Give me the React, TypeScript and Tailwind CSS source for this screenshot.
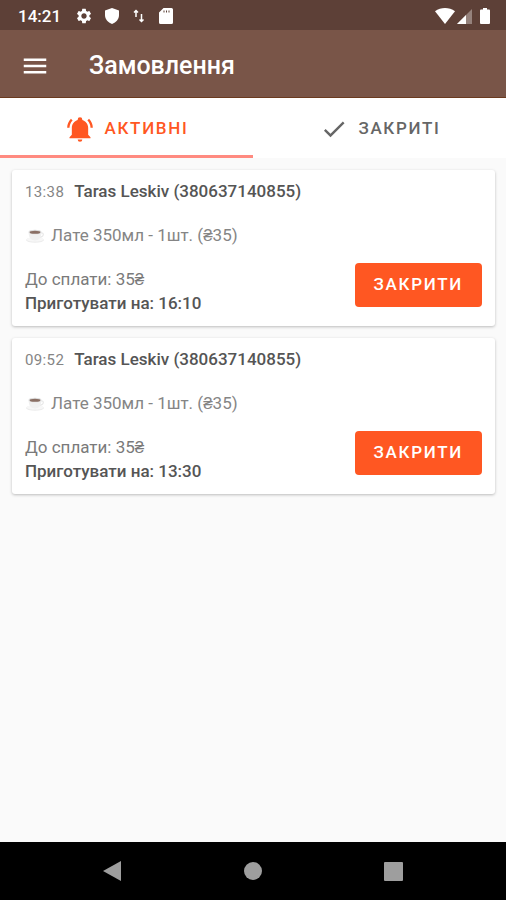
import { useState } from 'react';
import { MdCheck, MdMenu, MdSettings } from 'react-icons/md';

interface Order {
  id: number;
  time: string;
  customer: string;
  phone: string;
  item: string;
  total: number;
  readyAt: string;
}

const initialOrders: Order[] = [
  { id: 1, time: '13:38', customer: 'Taras Leskiv', phone: '380637140855', item: 'Лате 350мл - 1шт. (₴35)', total: 35, readyAt: '16:10' },
  { id: 2, time: '09:52', customer: 'Taras Leskiv', phone: '380637140855', item: 'Лате 350мл - 1шт. (₴35)', total: 35, readyAt: '13:30' },
];

function StatusBar() {
  return (
    <div className="flex h-[30px] items-center justify-between bg-[#5d4037] pt-0.5 pl-[18px] pr-4 text-white">
      <div className="flex items-center">
        <span className="w-[57px] text-[17px] leading-5 font-medium">14:21</span>
        <MdSettings className="h-[18px] w-[18px]" />
        <svg viewBox="0 0 14 16" className="ml-3 h-4 w-3.5" fill="currentColor">
          <path d="M7 0 14 2.6V7c0 4.2-2.8 7.4-7 9-4.2-1.6-7-4.8-7-9V2.6z" />
        </svg>
        <svg viewBox="0 0 12 16" className="ml-3.5 h-4 w-3" fill="none" stroke="currentColor" strokeWidth="1.5">
          <path d="M3 9V2.500M1 4.500l2-2 2 2M8.500 6v7.500M6.500 11.500l2 2 2-2" />
        </svg>
        <svg viewBox="0 0 14 16" className="ml-3.5 h-4 w-3.5" fill="currentColor">
          <path fillRule="evenodd" d="M4.500 0h8A1.500 1.500 0 0 1 14 1.500v13a1.500 1.500 0 0 1-1.500 1.500h-11A1.500 1.500 0 0 1 0 14.500V4.500zM4.500 2.500v2h1v-2zM7 2.500v2h1v-2zM9.500 2.500v2h1v-2z" />
        </svg>
      </div>
      <div className="flex items-center">
        <svg viewBox="0 0 20 16" className="h-4 w-5" fill="currentColor">
          <path d="M0 3.200C6-1 14-1 20 3.200L10 16z" />
        </svg>
        <svg viewBox="0 0 15 15" className="mr-2 ml-0.5 h-[15px] w-[15px]" fill="currentColor">
          <path d="M15 0v15H0z" opacity="0.35" />
          <path d="M9 6v9H0z" />
        </svg>
        <svg viewBox="0 0 10 16" className="h-4 w-2.5" fill="currentColor">
          <path d="M3 0h4v1.500h2a1 1 0 0 1 1 1V15a1 1 0 0 1-1 1H1a1 1 0 0 1-1-1V2.500a1 1 0 0 1 1-1h2z" />
        </svg>
      </div>
    </div>
  );
}

function BellRingIcon() {
  return (
    <svg viewBox="0 0 24 24" className="h-7 w-7" fill="currentColor">
      <path d="M21 19v1H3v-1l2-2v-6c0-3.100 2.030-5.830 5-6.710V4a2 2 0 0 1 4 0v.290c2.970.880 5 3.610 5 6.710v6l2 2m-7 2a2 2 0 0 1-4 0m9.750-17.810-1.420 1.420A8.980 8.980 0 0 1 21 11h2c0-2.930-1.160-5.750-3.250-7.810M1 11h2c0-2.400.960-4.700 2.670-6.390L4.250 3.190C2.160 5.250 1 8.070 1 11z" />
    </svg>
  );
}

function CoffeeIcon() {
  return (
    <svg viewBox="0 0 20 16" className="h-4 w-5 shrink-0">
      <ellipse cx="10" cy="13" rx="9" ry="2.800" fill="#ececec" />
      <ellipse cx="10" cy="12.300" rx="8.500" ry="2.300" fill="#f7f7f7" />
      <path d="M15.500 6c4-1 4 4-1.500 4.500" fill="none" stroke="#e8e8e8" strokeWidth="1.200" />
      <path d="M3.500 5c0 5 2.500 8.500 6.500 8.500s6.500-3.500 6.500-8.500z" fill="#f0f0f0" />
      <ellipse cx="10" cy="5" rx="6.500" ry="2.300" fill="#dedede" />
      <ellipse cx="10" cy="5.300" rx="5.300" ry="1.500" fill="#8a6f64" />
    </svg>
  );
}

function OrderCard({ order, onClose }: { order: Order; onClose: () => void }) {
  return (
    <article className="rounded-[3px] bg-white px-[13px] pt-[9px] pb-[11px] shadow-[0_1px_3px_rgba(0,0,0,0.25)]">
      <header className="flex h-6 items-baseline gap-2.5 leading-6">
        <time className="text-[15px] tracking-wide text-[#858585]">{order.time}</time>
        <h2 className="text-[17px] font-medium text-[#555555]">
          {order.customer} ({order.phone})
        </h2>
      </header>

      <p className="mt-5 flex items-center gap-1.5 text-[17px] leading-6 text-[#858585]">
        <CoffeeIcon />
        {order.item}
      </p>

      <div className="mt-4 flex items-start justify-between">
        <div className="pt-1 text-[17px] leading-6">
          <p className="text-[#7a7a7a]">До сплати: {order.total}₴</p>
          <p className="font-medium text-[#555555]">Приготувати на: {order.readyAt}</p>
        </div>
        <button
          onClick={onClose}
          className="h-11 rounded bg-[#ff5722] px-[19px] text-[17px] font-medium tracking-widest text-white"
        >
          ЗАКРИТИ
        </button>
      </div>
    </article>
  );
}

export default function App() {
  const [tab, setTab] = useState<'active' | 'closed'>('active');
  const [orders, setOrders] = useState<Order[]>(initialOrders);
  const [closed, setClosed] = useState<Order[]>([]);

  const closeOrder = (order: Order) => {
    setOrders(prev => prev.filter(o => o.id !== order.id));
    setClosed(prev => [order, ...prev]);
  };

  const tabClass = 'flex flex-1 items-center justify-center gap-2.5 border-b-[3px] pt-1 pl-0.5 text-[17px] font-medium tracking-widest';
  const visible = tab === 'active' ? orders : closed;

  return (
    <div className="flex min-h-screen flex-col bg-[#fafafa] font-[Roboto,sans-serif]">
      <StatusBar />

      <header className="flex h-[68px] items-center gap-[39px] border-b border-[#6b3a1f] bg-[#795548] px-5 pt-1 text-white">
        <button aria-label="Меню">
          <MdMenu className="h-[30px] w-[30px]" />
        </button>
        <h1 className="text-[25px] leading-8 font-medium">Замовлення</h1>
      </header>

      <div role="tablist" className="flex h-[60px] bg-white">
        <button
          role="tab"
          aria-selected={tab === 'active'}
          onClick={() => setTab('active')}
          className={`${tabClass} ${tab === 'active' ? 'border-[#ff8a80] text-[#ff5722]' : 'border-transparent text-[#666666]'}`}
        >
          <BellRingIcon />
          АКТИВНІ
        </button>
        <button
          role="tab"
          aria-selected={tab === 'closed'}
          onClick={() => setTab('closed')}
          className={`${tabClass} ${tab === 'closed' ? 'border-[#ff8a80] text-[#ff5722]' : 'border-transparent text-[#666666]'}`}
        >
          <MdCheck className="h-7 w-7" />
          ЗАКРИТІ
        </button>
      </div>

      <main className="flex flex-1 flex-col gap-3 py-3 pr-[11px] pl-3">
        {visible.map(order => (
          <OrderCard key={order.id} order={order} onClose={() => closeOrder(order)} />
        ))}
      </main>

      <nav className="flex h-[58px] bg-black px-[42px] text-[#9e9e9e]">
        <button aria-label="Назад" className="flex flex-1 items-center justify-center">
          <svg viewBox="0 0 20 20" className="h-5 w-5" fill="currentColor">
            <path d="M19 0v20L1 10z" />
          </svg>
        </button>
        <button aria-label="Додому" className="flex flex-1 items-center justify-center">
          <span className="h-[18px] w-[18px] rounded-full bg-[#9e9e9e]" />
        </button>
        <button aria-label="Огляд" className="flex flex-1 items-center justify-center">
          <span className="h-[19px] w-[19px] rounded-[1px] bg-[#9e9e9e]" />
        </button>
      </nav>
    </div>
  );
}
